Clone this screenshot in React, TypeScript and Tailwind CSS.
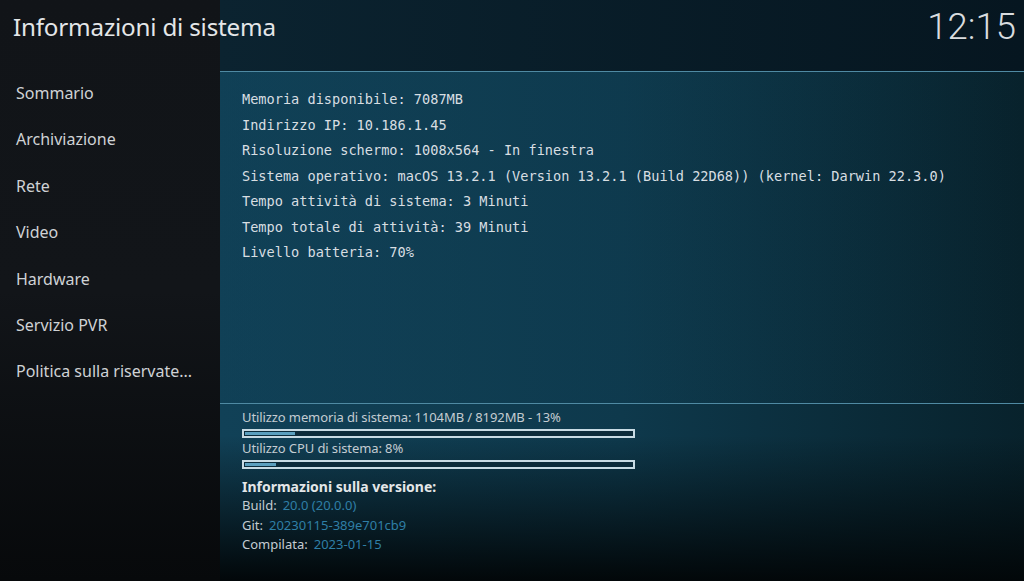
import React from 'react';

const menuItems = [
  'Sommario',
  'Archiviazione',
  'Rete',
  'Video',
  'Hardware',
  'Servizio PVR',
  'Politica sulla riservate...',
];

const infoLines = [
  'Memoria disponibile: 7087MB',
  'Indirizzo IP: 10.186.1.45',
  'Risoluzione schermo: 1008x564 - In finestra',
  'Sistema operativo: macOS 13.2.1 (Version 13.2.1 (Build 22D68)) (kernel: Darwin 22.3.0)',
  'Tempo attività di sistema: 3 Minuti',
  'Tempo totale di attività: 39 Minuti',
  'Livello batteria: 70%',
];

const versionInfo = [
  { label: 'Build:', value: '20.0 (20.0.0)' },
  { label: 'Git:', value: '20230115-389e701cb9' },
  { label: 'Compilata:', value: '2023-01-15' },
];

const UsageBar = ({ label, percent }: { label: string; percent: number }) => (
  <div className="flex flex-col">
    <div className="h-[17px] leading-[17px] text-[13px] text-[#c4ccd2] tracking-[-0.1px] whitespace-nowrap">{label}</div>
    <div className="mt-[3px] w-[393px] h-[9px] border-2 border-[#c8dbe4] bg-[#0c2b3a] p-px">
      <div className="h-full bg-[#5b9fbe]" style={{ width: `${percent}%` }} />
    </div>
  </div>
);

const App = () => {
  return (
    <div className="w-[1024px] h-[581px] overflow-hidden flex bg-[#121519] font-['Noto_Sans',sans-serif]">
      {/* Sidebar */}
      <div className="relative z-10 w-[220px] shrink-0 flex flex-col bg-linear-to-b from-[#111418] via-[#121519] to-[#07090b]">
        <div className="h-[71px] shrink-0 pl-[13px] pt-[9px]">
          <h1 className="whitespace-nowrap text-[24.2px] leading-[36px] text-[#e4e6e8] tracking-[-0.2px]">
            Informazioni di sistema
          </h1>
        </div>
        <ul className="flex flex-col pl-[16px] pt-[10px]">
          {menuItems.map(item => (
            <li key={item} className="h-[46.4px] leading-[24px] text-[16px] text-[#cfd2d5] whitespace-nowrap">
              {item}
            </li>
          ))}
        </ul>
      </div>

      {/* Main panel */}
      <div className="flex-1 flex flex-col bg-linear-to-r from-[#114157] via-[#0e394c] to-[#08222c]">
        <div className="flex-1 flex flex-col bg-linear-to-b from-transparent via-transparent via-75% to-[#020709]">
          <div className="h-[72px] shrink-0 flex justify-end pr-[8px] border-b border-[#4f8aa3] bg-linear-to-r from-[#0b2330] to-[#061620]">
            <div className="text-[36.5px] leading-[52px] font-light text-[#d9dcdf] font-['Roboto',sans-serif] pt-[1px]">
              12:15
            </div>
          </div>

          <div className="h-[332px] shrink-0 border-b border-[#4f8aa3] pl-[22px] pt-[15px] bg-linear-to-r from-[#0f3f55]/40 to-transparent">
            {infoLines.map(line => (
              <div
                key={line}
                className="h-[25.5px] leading-[25.5px] text-[13.6px] text-[#d8dee2] whitespace-nowrap font-['DejaVu_Sans_Mono',monospace]"
              >
                {line}
              </div>
            ))}
          </div>

          <div className="flex-1 flex flex-col pl-[22px] pt-[5px]">
            <UsageBar label="Utilizzo memoria di sistema: 1104MB / 8192MB - 13%" percent={13} />
            <div className="mt-[2px]">
              <UsageBar label="Utilizzo CPU di sistema: 8%" percent={8} />
            </div>
            <div className="mt-[8px] h-[19px] leading-[19px] text-[14px] font-bold text-[#e3e6e8]">
              Informazioni sulla versione:
            </div>
            {versionInfo.map(v => (
              <div key={v.label} className="h-[19.5px] leading-[19.5px] text-[13px] whitespace-nowrap">
                <span className="text-[#c4ccd2]">{v.label}</span>
                <span className="ml-[6px] text-[#2f7fa6]">{v.value}</span>
              </div>
            ))}
          </div>
        </div>
      </div>
    </div>
  );
};

export default App;
